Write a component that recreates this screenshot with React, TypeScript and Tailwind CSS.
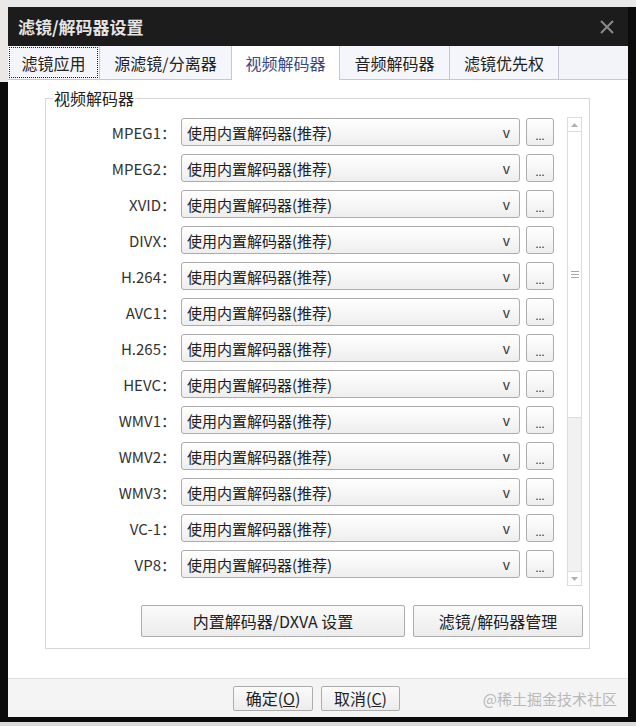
import React from "react";

const rows = ["MPEG1", "MPEG2", "XVID", "DIVX", "H.264", "AVC1", "H.265", "HEVC", "WMV1", "WMV2", "WMV3", "VC-1", "VP8"];

const tabs = [
  { label: "滤镜应用", w: "w-[92px]", focus: true },
  { label: "源滤镜/分离器", w: "w-[132px]" },
  { label: "视频解码器", w: "w-[108px]", active: true },
  { label: "音频解码器", w: "w-[110px]" },
  { label: "滤镜优先权", w: "w-[109px]" },
];

function Tab({ label, w, focus, active }: { label: string; w: string; focus?: boolean; active?: boolean }) {
  if (active) {
    return (
      <div className={`${w} h-full bg-white border-r border-[#c3c7d6] flex items-center justify-center text-[16px] text-[#3b4886] leading-none`}>
        {label}
      </div>
    );
  }
  return (
    <div className={`${w} h-full bg-[#f5f6fb] border-r border-b border-[#c3c7d6] flex items-center justify-center text-[16px] text-[#222] leading-none p-[1px]`}>
      {focus ? (
        <div className="w-full h-full border border-dotted border-[#222] flex items-center justify-center">{label}</div>
      ) : (
        label
      )}
    </div>
  );
}

export default function App() {
  return (
    <div className="w-[636px] h-[726px] flex flex-col bg-[#0b0b0b] overflow-hidden font-['Noto_Sans_CJK_SC','Noto_Sans',sans-serif]">
      <div className="h-[7px] bg-[#e9e9e9] shrink-0" />
      <div className="h-[710px] flex shrink-0">
        <div className="w-[8px] flex flex-col">
          <div className="h-[75px] bg-[#ebe8e5]" />
          <div className="flex-1 bg-[#0b0b0b]" />
        </div>
        <div className="w-[620px] flex flex-col bg-white">
          {/* title bar */}
          <div className="h-[39px] bg-[#1c1c1c] flex items-center justify-between pl-[10px] pr-[14px] shrink-0">
            <span className="text-[17px] font-bold text-[#e4e4e4] leading-none">滤镜/解码器设置</span>
            <svg width="14" height="14" viewBox="0 0 14 14">
              <path d="M1 1 L13 13 M13 1 L1 13" stroke="#8a8a8a" strokeWidth="2" />
            </svg>
          </div>
          {/* tabs */}
          <div className="h-[34px] flex shrink-0 bg-[#f3f4fa]">
            {tabs.map((t) => (
              <Tab key={t.label} {...t} />
            ))}
            <div className="flex-1 border-b border-[#c3c7d6]" />
          </div>
          {/* body */}
          <div className="h-[598px] bg-white shrink-0">
            <fieldset className="ml-[37px] mt-[8px] w-[545px] border border-[#d6d6d6] pb-[11px]">
              <legend className="ml-[7px] px-[1px] text-[16px] leading-[20px] text-[#222]">视频解码器</legend>
              <div className="pt-[10px] flex">
                <div className="w-[508px] flex flex-col gap-[8px]">
                  {rows.map((r) => (
                    <div key={r} className="h-[28px] flex items-center">
                      <div className="w-[130px] text-right text-[15px] leading-none text-[#333]">{r}：</div>
                      <div className="ml-[5px] w-[339px] h-[28px] border border-[#acacac] rounded-[3px] bg-gradient-to-b from-[#ffffff] to-[#eeeeee] flex items-center justify-between pl-[5px] pr-[9px]">
                        <span className="text-[15px] leading-none text-[#222]">使用内置解码器(推荐)</span>
                        <span className="text-[14px] leading-none text-[#333]">v</span>
                      </div>
                      <div className="ml-[6px] w-[28px] h-[28px] border border-[#acacac] rounded-[3px] bg-gradient-to-b from-[#ffffff] to-[#eeeeee] flex items-center justify-center">
                        <span className="text-[11px] leading-none text-[#333] pt-[6px]">...</span>
                      </div>
                    </div>
                  ))}
                </div>
                <div className="ml-[13px] mt-[-1px] w-[15px] h-[469px] border border-[#dcdcdc] bg-[#f1f1f1] flex flex-col">
                  <div className="h-[14px] bg-white border-b border-[#dcdcdc] flex items-center justify-center">
                    <svg width="7" height="4" viewBox="0 0 7 4">
                      <path d="M0 4 L3.5 0 L7 4 Z" fill="#b2b2b2" />
                    </svg>
                  </div>
                  <div className="h-[286px] bg-white border-b border-[#dcdcdc] flex items-center justify-center">
                    <svg width="8" height="7" viewBox="0 0 8 7">
                      <path d="M0 0.5 H8 M0 3.5 H8 M0 6.5 H8" stroke="#a8a8a8" strokeWidth="1" />
                    </svg>
                  </div>
                  <div className="flex-1" />
                  <div className="h-[14px] bg-white border-t border-[#dcdcdc] flex items-center justify-center">
                    <svg width="7" height="4" viewBox="0 0 7 4">
                      <path d="M0 0 L3.5 4 L7 0 Z" fill="#b2b2b2" />
                    </svg>
                  </div>
                </div>
              </div>
              <div className="mt-[19px] ml-[95px] flex gap-[8px]">
                <div className="w-[264px] h-[32px] border border-[#adadad] rounded-[2px] bg-gradient-to-b from-[#fbfbfb] to-[#ececec] flex items-center justify-center text-[16px] leading-none text-[#222]">
                  内置解码器/DXVA 设置
                </div>
                <div className="w-[170px] h-[32px] border border-[#adadad] rounded-[2px] bg-gradient-to-b from-[#fbfbfb] to-[#ececec] flex items-center justify-center text-[16px] leading-none text-[#222]">
                  滤镜/解码器管理
                </div>
              </div>
            </fieldset>
          </div>
          {/* footer */}
          <div className="flex-1 bg-[#f4f4f4] border-t border-[#dedede] flex items-center">
            <div className="ml-[225px] w-[80px] h-[25px] border border-[#adadad] rounded-[2px] bg-gradient-to-b from-[#fbfbfb] to-[#ececec] flex items-center justify-center text-[16px] leading-none text-[#222]">
              确定(<span className="underline">O</span>)
            </div>
            <div className="ml-[8px] w-[79px] h-[25px] border border-[#adadad] rounded-[2px] bg-gradient-to-b from-[#fbfbfb] to-[#ececec] flex items-center justify-center text-[16px] leading-none text-[#222]">
              取消(<span className="underline">C</span>)
            </div>
            <div className="ml-auto mr-[11px] text-[15px] leading-none text-[#b8b8b8]">@稀土掘金技术社区</div>
          </div>
        </div>
        <div className="w-[8px] bg-[#0b0b0b]" />
      </div>
      <div className="h-[5px] bg-[#0b0b0b] shrink-0" />
      <div className="flex-1 bg-[#dcdcdc]" />
    </div>
  );
}
